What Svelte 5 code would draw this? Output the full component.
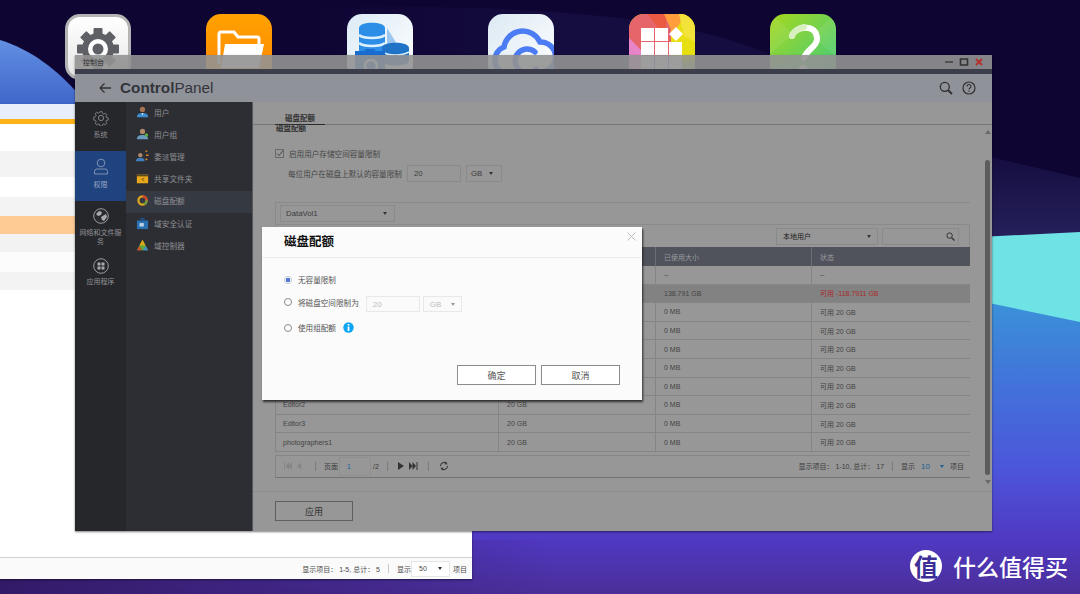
<script>
  const stripes = [
    { h: 27, c: '#ffffff' }, { h: 26, c: '#f3f3f3' }, { h: 20, c: '#ffffff' }, { h: 19, c: '#f3f3f3' },
    { h: 18, c: '#fecb95' }, { h: 18, c: '#f2f2f2' }, { h: 20, c: '#fcfcfc' }, { h: 18, c: '#f3f3f3' }
  ];
  const person = (skin, body) => `<circle cx="7.5" cy="4" r="3" fill="${skin}"/><path d="M1 13c0-4 3-5 6.500-5s6.500 1 6.500 5z" fill="${body}"/>`;
  const nav = [
    { t: '用户', i: person('#a8734f', '#3f8fd0') + '<path d="M6.500 8h2l-1 3z" fill="#eee"/>' },
    { t: '用户组', i: person('#b08a6a', '#6a9cc0') + '<circle cx="12" cy="8" r="2" fill="#5fae3a"/>' },
    { t: '委派管理', i: '<circle cx="5" cy="6" r="2.500" fill="#b08a6a"/><path d="M0 13c0-3 2-4 5-4s5 1 5 4z" fill="#3f7fc0"/><path d="M11 2l2-1M11.500 6h3M11 10l2 1.500" stroke="#d9862a" stroke-width="1.600"/>' },
    { t: '共享文件夹', i: '<path d="M1 3h13v10H1z" fill="#e8a81c"/><path d="M1 3h13v2H1z" fill="#5b4a20"/><path d="M9.500 7l-3 1.500 3 1.500" stroke="#7a5a10" fill="none"/>' },
    { t: '磁盘配额', sel: true, i: '<circle cx="7.500" cy="7.500" r="4.700" fill="none" stroke="#dca81c" stroke-width="2.600"/><path d="M7.500 2.800a4.700 4.700 0 0 1 4.700 4.700" fill="none" stroke="#d8402c" stroke-width="2.600"/><path d="M12.200 7.500a4.700 4.700 0 0 1-3 4.400" fill="none" stroke="#6a9a3a" stroke-width="2.600"/>' },
    { t: '域安全认证', i: '<path d="M1 4h13v10H1z" fill="#2a6fb0"/><path d="M5 1h5v3H5z" fill="#1e4f80"/><path d="M4 7h5v4H4z" fill="#b9d2e6"/>' },
    { t: '域控制器', i: '<path d="M7.500 1l6.500 12H1z" fill="#5fa83a"/><path d="M7.500 1L4 7.500h7z" fill="#dca81c"/><path d="M1 13l3-5 3 5z" fill="#c8502c"/><path d="M8 13l3-5 3 5z" fill="#3f8fd0"/>' }
  ];
  const rows = [
    ['', '', '--', '--'],
    ['', '', '138.791 GB', '可用 -118.7911 GB'],
    ['', '', '0 MB', '可用 20 GB'],
    ['', '', '0 MB', '可用 20 GB'],
    ['', '', '0 MB', '可用 20 GB'],
    ['', '', '0 MB', '可用 20 GB'],
    ['', '', '0 MB', '可用 20 GB'],
    ['Editor2', '20 GB', '0 MB', '可用 20 GB'],
    ['Editor3', '20 GB', '0 MB', '可用 20 GB'],
    ['photographers1', '20 GB', '0 MB', '可用 20 GB']
  ];
  const teeth = [0, 45, 90, 135, 180, 225, 270, 315];
</script>

<div class="desktop">
  <svg class="wall" viewBox="0 0 1080 594" width="1080" height="594" aria-hidden="true">
    <defs>
      <linearGradient id="low" x1="0" y1="300" x2="0" y2="594" gradientUnits="userSpaceOnUse">
        <stop offset="0" stop-color="#3a92d8" />
        <stop offset="0.28" stop-color="#4273da" />
        <stop offset="0.58" stop-color="#4c55da" />
        <stop offset="0.82" stop-color="#5038c2" />
        <stop offset="1" stop-color="#4a2f98" />
      </linearGradient>
      <linearGradient id="navy" x1="0" y1="150" x2="0" y2="240" gradientUnits="userSpaceOnUse">
        <stop offset="0" stop-color="#140c3e" />
        <stop offset="1" stop-color="#26215c" />
      </linearGradient>
      <linearGradient id="hill" x1="0" y1="40" x2="0" y2="110" gradientUnits="userSpaceOnUse">
        <stop offset="0" stop-color="#628fe2" />
        <stop offset="1" stop-color="#3c62c8" />
      </linearGradient>
      <linearGradient id="dusk" x1="0" y1="0" x2="560" y2="0" gradientUnits="userSpaceOnUse">
        <stop offset="0" stop-color="#331a68" />
        <stop offset="1" stop-color="#331a68" stop-opacity="0" />
      </linearGradient>
      <linearGradient id="veil" x1="300" y1="0" x2="560" y2="0" gradientUnits="userSpaceOnUse">
        <stop offset="0" stop-color="#1a1148" stop-opacity="0" />
        <stop offset="1" stop-color="#1a1148" stop-opacity="0.6" />
      </linearGradient>
    </defs>
    <rect width="1080" height="594" fill="#0e0533" />
    <path d="M300 8c120-3 220 0 300 8 90 8 170 30 230 70v30H300z" fill="url(#veil)" />
    <path d="M0 110h1080v484H0z" fill="url(#low)" />
    <path d="M960 110h120v122l-120 6z" fill="#0e0533" />
    <path d="M960 150l120 28v56l-120 6z" fill="url(#navy)" />
    <path d="M960 238l120-6v90l-120-25z" fill="#6fe2e6" />
    <path d="M0 40c30 9 58 30 80 56v20H0z" fill="url(#hill)" />
    <rect y="540" width="560" height="54" fill="url(#dusk)" />
  </svg>

  <div class="dock">
    <div class="tile gear-tile">
      <svg viewBox="0 0 60 60" width="60" height="60">
        <g transform="translate(30 32)">
          {#each teeth as a}
            <rect x="-4.500" y="-21" width="9" height="10" rx="1" fill="#5f6066" transform="rotate({a})" />
          {/each}
          <circle r="16" fill="#5f6066" />
          <circle r="10" fill="#fff" />
          <circle r="5.500" fill="#5f6066" />
        </g>
      </svg>
    </div>
    <div class="tile orange">
      <svg viewBox="0 0 66 66" width="66" height="66">
        <path d="M13 50V20q0-2 2-2h13l4 5h19q2 0 2 2v6" fill="none" stroke="#fff" stroke-width="3" />
        <path d="M19 30h39l-5 24H15z" fill="#fff" />
      </svg>
    </div>
    <div class="tile db">
      <svg viewBox="0 0 66 66" width="66" height="66">
        <path d="M40 14l20 32H40z" fill="#9cc6f0" />
        <path d="M12 14c0-7 26-7 26 0v26H12z" fill="#2d8ee8" />
        <path d="M12 21c5 4 21 4 26 0M12 29c5 4 21 4 26 0" stroke="#dff0ff" stroke-width="2.500" fill="none" />
        <path d="M35 34c0-7 27-7 27 0v13c0 6-27 6-27 0z" fill="#1f74c8" />
        <path d="M35 38c7 4 20 4 27 0" stroke="#dff0ff" stroke-width="1.500" fill="none" />
        <path d="M8 37h9l2-2h8l2 2h9v30H8z" fill="#1a6dd0" />
        <circle cx="24" cy="52" r="6" fill="none" stroke="#fff" stroke-width="2.500" />
      </svg>
    </div>
    <div class="tile cloud">
      <svg viewBox="0 0 66 66" width="66" height="66">
        <path d="M19 60a14 14 0 0 1-3-27 19 19 0 0 1 36-5 14 14 0 0 1 1 30" fill="none" stroke="#4c7cf3" stroke-width="5.500" stroke-linecap="round" />
        <path d="M47 38a12 12 0 1 0 1 17" fill="none" stroke="#4c7cf3" stroke-width="5.500" stroke-linecap="round" />
      </svg>
    </div>
    <div class="tile apps">
      <svg viewBox="0 0 66 66" width="66" height="66">
        <path d="M0 0h66v66H0z" fill="#e8df10" />
        <path d="M0 0h42v42H0z" fill="#e5656a" />
        <path d="M19 0h19L36 24z" fill="#ea5a42" />
        <path d="M35 0h22L44 20z" fill="#ff9e3a" />
        <path d="M50 0h16v28L55 22z" fill="#f2e23a" />
        <path d="M0 24l14 14v28H0z" fill="#e884c8" />
        <path d="M12 42h28v24H12z" fill="#9060d0" />
        <path d="M50 48h16v18H50z" fill="#a8d84a" />
        <path d="M12 14h13v13H12zM26 14h13v13H26zM12 28h13v13H12zM26 28h13v13H26zM40 28h13v13H40z" fill="#fff" />
        <path d="M47 13l7 7-7 7-7-7z" fill="#fff" />
        <path d="M12 42h13v13H12zM26 42h13v13H26zM40 42h13v13H40z" fill="#fff" />
      </svg>
    </div>
    <div class="tile help">
      <svg viewBox="0 0 66 66" width="66" height="66">
        <path d="M0 0l24 20L0 40zM66 0L40 22l26 20z" fill="#fff" opacity="0.08" />
        <path d="M22 22c2-9 25-14 25 3 0 8-11 11-13 19" fill="none" stroke="#fff" stroke-width="6" stroke-linecap="round" />
        <path d="M22 22c2-5 7-8 12-9" fill="none" stroke="#d8efc0" stroke-width="6" stroke-linecap="round" />
        <circle cx="33" cy="55" r="4" fill="#fff" />
      </svg>
    </div>
  </div>

  <section class="listwin">
    <div class="lw-head"></div>
    <div class="lw-accent"></div>
    {#each stripes as s}
      <div style="height:{s.h}px;background:{s.c}"></div>
    {/each}
    <div class="lw-fill"></div>
    <div class="lw-foot">
      <span>显示项目：&nbsp;1-5, 总计：&nbsp;5</span>
      <i class="vsep"></i>
      <span>显示</span>
      <span class="lw-select"><span>50</span><b class="caret dark"></b></span>
      <span>项目</span>
    </div>
  </section>

  <section class="panel">
    <header class="titlebar">
      <span>控制台</span>
      <div class="winbtns">
        <svg viewBox="0 0 10 10" width="10" height="10"><path d="M1 5h8" stroke="#444" stroke-width="1.600" /></svg>
        <svg viewBox="0 0 10 10" width="10" height="10"><path d="M1.500 2h7v6h-7z" fill="none" stroke="#333" stroke-width="1.600" /></svg>
        <svg viewBox="0 0 10 10" width="10" height="10"><path d="M2 2l6 6M8 2L2 8" stroke="#b5302a" stroke-width="1.800" /></svg>
      </div>
    </header>
    <div class="darkbar"></div>
    <div class="apphead">
      <svg class="back" viewBox="0 0 14 12" width="14" height="12"><path d="M13 6H2M6.500 1.500L2 6l4.500 4.500" fill="none" stroke="#333" stroke-width="1.300" /></svg>
      <h1><b>Control</b>Panel</h1>
      <div class="headtools">
        <svg viewBox="0 0 14 14" width="14" height="14"><circle cx="5.800" cy="5.800" r="4.500" fill="none" stroke="#2f2f33" stroke-width="1.300" /><path d="M9 9l4 4" stroke="#2f2f33" stroke-width="1.800" /></svg>
        <svg viewBox="0 0 14 14" width="14" height="14"><circle cx="7" cy="7" r="6" fill="none" stroke="#2f2f33" stroke-width="1.200" /><path d="M5 5.500c0-2.600 4-2.600 4 0 0 1.500-2 1.500-2 3" fill="none" stroke="#2f2f33" stroke-width="1.100" /><circle cx="7" cy="10.300" r=".7" fill="#2f2f33" /></svg>
      </div>
    </div>

    <div class="main">
      <nav class="rail">
        <div class="rail-item r1">
          <svg viewBox="0 0 16 16" width="16" height="16"><g fill="none" stroke="#8e8f93" stroke-width=".9"><circle cx="8" cy="8" r="2.600" /><path d="M6.800 1h2.400l.4 2 1.500.7 1.800-1.100 1.600 1.700-1.100 1.700.6 1.500 2 .4v2.400l-2 .4-.6 1.500 1.100 1.700-1.600 1.700-1.800-1.100-1.500.7-.4 2H6.800l-.4-2-1.500-.7-1.800 1.100-1.600-1.700 1.100-1.700-.6-1.500-2-.4V6.900l2-.4.6-1.500-1.100-1.700 1.600-1.700 1.800 1.100 1.500-.7z" transform="translate(.8 .8) scale(.9)" /></g></svg>
          <span>系统</span>
        </div>
        <div class="rail-item r2">
          <svg viewBox="0 0 16 17" width="16" height="17"><g fill="none" stroke="#8c9bb8" stroke-width=".9"><circle cx="8" cy="5" r="3.800" /><path d="M1.500 16v-2.500q0-2.500 2.500-2.500h8q2.500 0 2.500 2.500V16z" /></g></svg>
          <span>权限</span>
        </div>
        <div class="rail-item r3">
          <svg viewBox="0 0 16 16" width="16" height="16"><circle cx="8" cy="8" r="7.300" fill="#2a2b30" stroke="#9a9b9f" stroke-width="1" /><path d="M3 6l3-3 3 1-1 3-3 1zM8 9l5-3 1 3-3 4-2-1z" fill="#a9aaae" /></svg>
          <span>网络和文件服务</span>
        </div>
        <div class="rail-item r4">
          <svg viewBox="0 0 16 16" width="16" height="16"><circle cx="8" cy="8" r="7.300" fill="none" stroke="#9a9b9f" stroke-width="1" /><path d="M4.500 4.500h3v3h-3zM8.500 4.500h3v3h-3zM4.500 8.500h3v3h-3zM8.500 8.500h3v3h-3z" fill="#a9aaae" /></svg>
          <span>应用程序</span>
        </div>
      </nav>

      <ul class="subnav">
        {#each nav as n}
          <li class:sel={n.sel}>
            <svg viewBox="0 0 15 15" width="15" height="15">{@html n.i}</svg>
            <span>{n.t}</span>
          </li>
        {/each}
      </ul>

      <div class="content">
        <div class="scrollarea">
          <div class="tabs"><span>磁盘配额</span></div>
          <h2>磁盘配额</h2>
          <label class="check">
            <svg viewBox="0 0 9 9" width="9" height="9"><rect x=".5" y=".5" width="8" height="8" fill="none" stroke="#6a6a6a" /><path d="M2 4.500l2 2 4-5" fill="none" stroke="#4a4a4a" stroke-width="1" /></svg>
            <span>启用用户存储空间容量限制</span>
          </label>
          <div class="limit">
            <span>每位用户在磁盘上默认的容量限制</span>
            <span class="field f-num">20</span>
            <span class="field f-unit">GB<b class="caret dark"></b></span>
          </div>
          <div class="volbar">
            <span class="field f-vol">DataVol1<b class="caret dark"></b></span>
          </div>
          <div class="tablebox">
            <div class="toolbar">
              <span class="field f-users">本地用户<b class="caret dark"></b></span>
              <span class="field f-search">
                <svg viewBox="0 0 10 10" width="9" height="9"><circle cx="4" cy="4" r="3" fill="none" stroke="#333" stroke-width="1.100" /><path d="M6.300 6.300L9.500 9.500" stroke="#333" stroke-width="1.500" /></svg>
              </span>
            </div>
            <div class="row thead">
              <span></span><span></span><span>已使用大小</span><span>状态</span>
            </div>
            {#each rows as r, idx}
              <div class="row" class:hot={idx === 1}>
                <span>{r[0]}</span><span>{r[1]}</span><span>{r[2]}</span><span class:red={idx === 1}>{r[3]}</span>
              </div>
            {/each}
          </div>
          <div class="pager">
            <svg class="off" viewBox="0 0 9 8" width="9" height="8"><path d="M1 0h1v8H1zM6 0v8L2.500 4zM9 0v8L5.500 4z" /></svg>
            <svg class="off p-prev" viewBox="0 0 6 8" width="5" height="8"><path d="M5 0v8L0 4z" /></svg>
            <i class="vsep s1"></i>
            <span>页面</span>
            <span class="pageinput">1</span>
            <span class="p-total">/2</span>
            <i class="vsep s2"></i>
            <svg class="p-next" viewBox="0 0 6 8" width="6" height="8"><path d="M0 0v8l6-4z" /></svg>
            <svg class="p-last" viewBox="0 0 9 8" width="9" height="8"><path d="M0 0v8l3.500-4zM3.500 0v8L7 4zM7.500 0h1v8h-1z" /></svg>
            <i class="vsep s3"></i>
            <svg class="p-ref" viewBox="0 0 10 10" width="10" height="10"><path d="M1.500 5a3.500 3.500 0 0 1 6-2.500M8.500 5a3.500 3.500 0 0 1-6 2.500" fill="none" stroke="#3a3a3a" stroke-width="1.100" /><path d="M7 .5l1.500 3-3-.3zM3 9.500l-1.500-3 3 .3z" fill="#3a3a3a" /></svg>
            <div class="p-right">
              <span>显示项目：&nbsp;1-10, 总计：&nbsp;17</span>
              <i class="vsep"></i>
              <span>显示</span>
              <span class="blue">10</span>
              <b class="caret bluecaret"></b>
              <span>项目</span>
            </div>
          </div>
          <div class="scrollbar">
            <b class="tri up"></b>
            <i class="thumb"></i>
            <b class="tri down"></b>
          </div>
        </div>
        <footer class="applybar"><span class="applybtn">应用</span></footer>
      </div>
    </div>
  </section>

  <div class="modal" role="dialog">
    <div class="m-head">
      <h3>磁盘配额</h3>
      <svg viewBox="0 0 9 9" width="9" height="9"><path d="M.5.500l8 8M8.500.5l-8 8" stroke="#b5b5b5" stroke-width=".9" /></svg>
    </div>
    <div class="m-body">
      <div class="m-row"><i class="radio on"></i><span>无容量限制</span></div>
      <div class="m-row r-limit">
        <i class="radio"></i><span>将磁盘空间限制为</span>
        <span class="mfield mf-num">20</span>
        <span class="mfield mf-unit">GB<b class="caret light"></b></span>
      </div>
      <div class="m-row">
        <i class="radio"></i><span>使用组配额</span>
        <svg class="info" viewBox="0 0 11 11" width="11" height="11"><circle cx="5.500" cy="5.500" r="5.200" fill="#0aa5f5" /><path d="M4.600 2h1.800v1.500H4.600zM4.600 4.500h1.800V9H4.600z" fill="#fff" /></svg>
      </div>
    </div>
    <div class="m-foot">
      <span class="mbtn">确定</span>
      <span class="mbtn">取消</span>
    </div>
  </div>

  <div class="mark">
    <span class="mark-badge">值</span>
    <span class="mark-text">什么值得买</span>
  </div>
</div>

<style>
  :global(body) { margin: 0; background: #0e0533; }
  .desktop {
    position: relative;
    width: 1080px;
    height: 594px;
    overflow: hidden;
    font-family: "Liberation Sans", "Noto Sans CJK SC", sans-serif;
    font-size: 7px;
    color: #464646;
  }
  h1, h2, h3, ul { margin: 0; padding: 0; }
  li { list-style: none; }
  i, b { font-style: normal; display: block; }
  svg { display: block; flex: none; }
  .wall { position: absolute; inset: 0; }

  .dock { position: absolute; left: 65px; top: 14px; display: flex; gap: 75px; }
  .tile { width: 66px; height: 66px; border-radius: 15px; overflow: hidden; box-sizing: border-box; }
  .gear-tile {
    background: linear-gradient(#ffffff, #e6e6e6);
    border: 3px solid #b4b4b4;
  }
  .orange { background: linear-gradient(#ffa200, #ff8500); }
  .db { background: linear-gradient(135deg, #dcebf6, #ffffff); }
  .cloud { background: linear-gradient(135deg, #dce9f2, #ffffff); }
  .help { background: linear-gradient(135deg, #a6d81e, #3ecb80); }

  .listwin {
    position: absolute;
    left: 0;
    top: 104px;
    width: 472px;
    height: 475px;
    background: #fff;
    display: flex;
    flex-direction: column;
    box-shadow: 0 1px 2px rgba(0, 0, 0, 0.5);
  }
  .lw-head { height: 15px; background: #e9eefb; }
  .lw-accent { height: 5px; background: #fbb117; }
  .lw-fill { flex: 1; }
  .lw-foot {
    height: 21px;
    border-top: 1px solid #cfcfcf;
    background: #fafafa;
    display: flex;
    align-items: center;
    justify-content: flex-end;
    gap: 3px;
    padding-right: 5px;
    color: #4a4a4a;
  }
  .lw-foot .vsep { margin: 0 5px; background: #c8c8c8; }
  .lw-select {
    width: 39px;
    height: 16px;
    box-sizing: border-box;
    border: 1px solid #e6e6e6;
    background: #fff;
    display: flex;
    align-items: center;
    justify-content: space-between;
    padding: 0 7px;
    margin-left: -3px;
  }
  .vsep { width: 1px; height: 9px; background: #7d7d7d; flex: none; }

  .caret {
    width: 0;
    height: 0;
    border-left: 2.500px solid transparent;
    border-right: 2.500px solid transparent;
    border-top: 3px solid;
  }
  .caret.dark { border-top-color: #333; }
  .caret.light { border-top-color: #9a9a9a; }
  .bluecaret { border-top-color: #1c5f98; }

  .panel {
    position: absolute;
    left: 75px;
    top: 55px;
    width: 917px;
    height: 476px;
    display: flex;
    flex-direction: column;
    box-shadow: 0 1px 2px rgba(0, 0, 0, 0.5);
  }
  .titlebar {
    height: 14px;
    background: rgba(146, 146, 146, 0.9);
    display: flex;
    align-items: center;
    justify-content: space-between;
    padding: 0 8px;
    color: #2e2e2e;
  }
  .winbtns { display: flex; gap: 5px; }
  .darkbar { height: 5px; background: #3c3f4b; }
  .apphead {
    height: 28px;
    background: #90929a;
    display: flex;
    align-items: center;
    padding-left: 23px;
    padding-right: 16px;
    color: #33353a;
  }
  .back { margin-right: 8px; }
  h1 { font-size: 15.300px; font-weight: 400; line-height: 1; }
  h1 b { display: inline; font-weight: 700; }
  .headtools { margin-left: auto; display: flex; gap: 9px; }
  .main { flex: 1; display: flex; min-height: 0; }

  .rail { width: 51px; background: #26272b; color: #8f9094; font-size: 7px; text-align: center; position: relative; }
  .rail-item { display: flex; flex-direction: column; align-items: center; box-sizing: border-box; line-height: 8.500px; }
  .rail-item span { display: block; margin-top: 5px; }
  .r1 { height: 49px; padding-top: 8px; }
  .r2 { height: 50px; padding-top: 7px; background: #1f437f; color: #9aa8c4; }
  .r2 span { margin-top: 6px; }
  .r3 { height: 56px; padding: 7px 3px 0; }
  .r4 { padding-top: 1px; }
  .r4 span { margin-top: 4px; }

  .subnav { width: 127px; background: #2d2e33; color: #8e8f93; font-size: 7.700px; border-right: 1px solid #55565a; box-sizing: border-box; }
  .subnav li { height: 22.200px; box-sizing: border-box; display: flex; align-items: center; gap: 5px; padding: 0 0 2px 10px; }
  .subnav li svg { width: 13px; height: 13px; }
  .subnav li.sel { background: #353942; }

  .content { flex: 1; min-width: 0; display: flex; flex-direction: column; background: #979797; }
  .scrollarea { flex: 1; position: relative; padding: 0 22px; min-height: 0; }
  .tabs { height: 22px; border-bottom: 1px solid #767676; margin: 0 -22px; padding-left: 22px; }
  .tabs span {
    display: block;
    width: 50px;
    height: 23px;
    box-sizing: border-box;
    border-bottom: 1.500px solid #2a2a2a;
    text-align: center;
    padding-top: 13px;
    line-height: 8px;
    font-size: 7.500px;
    font-weight: 700;
    color: #333;
  }
  h2 { font-size: 7.500px; line-height: 8px; height: 8px; color: #333; margin-left: 1px; }
  .check { display: flex; align-items: center; gap: 5px; height: 10px; margin-top: 15px; font-size: 7.600px; }
  .limit { display: flex; align-items: center; height: 17px; margin-top: 7px; padding-left: 13px; font-size: 7.600px; }
  .field {
    box-sizing: border-box;
    height: 17px;
    border: 1px solid #8a8a8a;
    display: flex;
    align-items: center;
    justify-content: space-between;
    font-size: 7.800px;
    color: #3c3c3c;
  }
  .f-num { width: 54px; margin-left: 5px; padding-left: 6px; }
  .f-unit { width: 36px; margin-left: 5px; padding: 0 8px 0 4px; }
  .volbar { margin-top: 20px; height: 22px; box-sizing: border-box; border-top: 1px solid #8a8a8a; border-left: 1px solid #8a8a8a; padding: 2px 0 0 4px; }
  .f-vol { width: 115px; padding: 0 7px 0 5px; }
  .toolbar {
    height: 23px;
    box-sizing: border-box;
    border: 1px solid #8a8a8a;
    border-bottom: 0;
    display: flex;
    justify-content: flex-end;
    align-items: center;
    gap: 4px;
    padding-right: 10px;
  }
  .f-users { width: 102px; padding: 0 6px; color: #222; font-size: 7px; }
  .f-search { width: 77px; justify-content: flex-end; padding-right: 3px; }
  .row {
    display: grid;
    grid-template-columns: 223px 157px 156px 1fr;
    height: 18.600px;
    box-sizing: border-box;
    border-bottom: 1px solid #858585;
    border-left: 1px solid #858585;
    align-items: center;
    color: #444;
  }
  .row span { padding-left: 8px; height: 100%; display: flex; align-items: center; border-right: 1px solid #858585; }
  .row span:first-child { padding-left: 7px; }
  .row span:last-child { border-right: 0; }
  .row.thead { height: 19px; background: #50535c; color: #9a9b9f; border: 0; padding-left: 1px; }
  .row.thead span { border-right-color: #6c6e76; }
  .row.hot { background: #828282; }
  .row.hot span { border-right-color: #828282; }
  .red { color: #a82a2a; }

  .pager {
    margin-top: 3px;
    height: 23px;
    box-sizing: border-box;
    border-left: 1px solid #858585;
    border-top: 1px solid #858585;
    border-bottom: 1.500px solid #727272;
    display: flex;
    align-items: center;
    padding-left: 7px;
    color: #3c3c3c;
  }
  .pager svg { fill: #333; }
  .pager svg.off { fill: #868686; }
  .p-prev { margin-left: 5px; }
  .s1 { margin: 0 8px 0 13px; background: #7a7a7a; }
  .pageinput {
    width: 32px;
    height: 19px;
    box-sizing: border-box;
    border: 1px solid #8f8f8f;
    margin-left: 1px;
    padding-left: 7px;
    display: flex;
    align-items: center;
    color: #1c5f98;
  }
  .p-total { margin-left: 2px; }
  .s2 { margin: 0 10px 0 8px; background: #7a7a7a; }
  .p-last { margin-left: 5px; }
  .s3 { margin: 0 10px 0 10px; background: #7a7a7a; }
  .p-right { margin-left: auto; display: flex; align-items: center; gap: 6px; padding-right: 6px; }
  .p-right .vsep { background: #7a7a7a; margin: 0 2px; }
  .blue { color: #1c5f98; font-size: 8px; margin-right: 4px; }
  .scrollbar {
    position: absolute;
    right: 2px;
    top: 28px;
    bottom: 2px;
    width: 5px;
    display: flex;
    flex-direction: column;
    align-items: center;
  }
  .thumb { width: 5px; height: 315px; margin-top: 26px; background: #5c5c5c; border-radius: 3px; }
  .tri { width: 0; height: 0; border-left: 3.500px solid transparent; border-right: 3.500px solid transparent; }
  .tri.up { border-bottom: 4px solid #6a6a6a; }
  .tri.down { border-top: 4px solid #6a6a6a; margin-top: 5px; }
  .applybar { height: 40px; box-sizing: border-box; border-top: 1px solid #8b8b8b; padding: 9px 22px 0; }
  .applybtn {
    display: flex;
    width: 78px;
    height: 20px;
    box-sizing: border-box;
    border: 1.500px solid #5f5f5f;
    align-items: center;
    justify-content: center;
    font-size: 9px;
    color: #333;
  }

  .modal {
    position: absolute;
    left: 262px;
    top: 227px;
    width: 380px;
    height: 173px;
    background: #fbfbfb;
    box-shadow: 1px 2px 2px rgba(30, 30, 30, 0.85);
    display: flex;
    flex-direction: column;
    font-size: 7.600px;
    color: #555;
  }
  .m-head {
    height: 31px;
    box-sizing: border-box;
    border-bottom: 1px solid #ececec;
    display: flex;
    justify-content: space-between;
    padding: 5px 6px 0 22px;
  }
  h3 { font-size: 12.500px; line-height: 20px; color: #111; font-weight: 700; }
  .m-body { flex: 1; padding: 13px 22px 0; display: flex; flex-direction: column; gap: 7px; }
  .m-row { display: flex; align-items: center; gap: 6px; height: 17px; }
  .r-limit { height: 16px; margin-top: 1px; }
  .r-limit > span:nth-child(2), .r-limit .radio { position: relative; top: -2px; }
  .radio { width: 8px; height: 8px; box-sizing: border-box; border: 1px solid #8a8a8a; border-radius: 50%; background: #fff; flex: none; }
  .radio.on { border-color: #c4c8d4; background: radial-gradient(circle, #4d76e0 0 2px, #fff 2.500px); }
  .mfield {
    height: 16px;
    box-sizing: border-box;
    border: 1px solid #e8e8e8;
    background: #fafafa;
    display: flex;
    align-items: center;
    justify-content: space-between;
    color: #c0c0c0;
    font-size: 8px;
  }
  .mf-num { width: 54px; margin-left: 1px; padding-left: 6px; }
  .mf-unit { width: 39px; margin-left: -3px; padding: 0 6px; }
  .info { margin-left: 1px; }
  .m-foot { display: flex; justify-content: flex-end; gap: 5px; padding: 0 22px 15px; }
  .mbtn {
    display: flex;
    width: 79px;
    height: 20px;
    box-sizing: border-box;
    border: 1.500px solid #8c8c8c;
    background: #fff;
    align-items: center;
    justify-content: center;
    font-size: 9px;
    color: #555;
  }

  .mark { position: absolute; left: 910px; top: 550px; display: flex; align-items: center; gap: 11px; }
  .mark-badge {
    width: 32px;
    height: 32px;
    border-radius: 50%;
    background: #fff;
    color: #3d2f96;
    font-family: "Noto Sans CJK SC", sans-serif;
    font-size: 24px;
    font-weight: 700;
    line-height: 32px;
    text-align: center;
  }
  .mark-text {
    font-family: "Noto Sans CJK SC", sans-serif;
    font-size: 23px;
    line-height: 32px;
    color: #fff;
    font-weight: 500;
  }
</style>
